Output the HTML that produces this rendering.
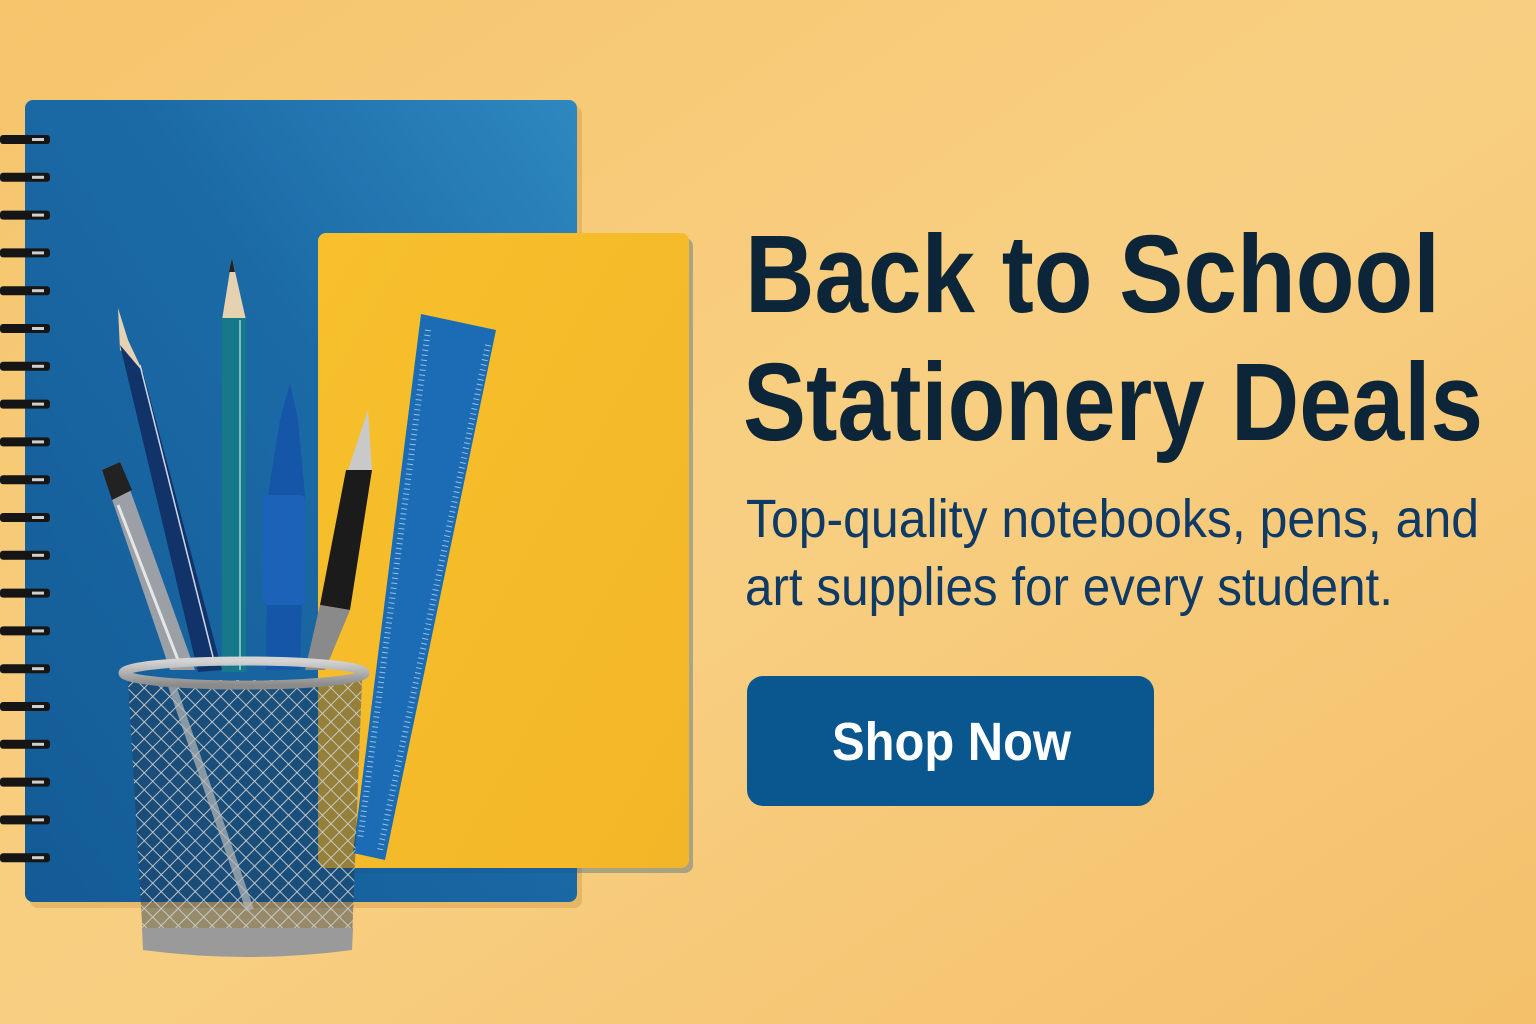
<!DOCTYPE html>
<html><head><meta charset="utf-8"><style>
html,body{margin:0;padding:0;width:1536px;height:1024px;overflow:hidden}
svg{display:block}
</style></head><body>
<svg width="1536" height="1024" viewBox="0 0 1536 1024" xmlns="http://www.w3.org/2000/svg">
<defs>
<linearGradient id="bg" x1="0" y1="0" x2="1" y2="1">
<stop offset="0" stop-color="#f6c56c"/><stop offset="0.5" stop-color="#f8cf82"/><stop offset="1" stop-color="#f4c06a"/>
</linearGradient>
<linearGradient id="blue" x1="0" y1="1" x2="1" y2="0">
<stop offset="0" stop-color="#135b96"/><stop offset="0.6" stop-color="#1b6aa6"/><stop offset="1" stop-color="#2e88bf"/>
</linearGradient>
<linearGradient id="yel" x1="0" y1="0" x2="1" y2="1">
<stop offset="0" stop-color="#f7c02c"/><stop offset="1" stop-color="#f3b628"/>
</linearGradient>
<pattern id="mesh" width="12" height="12" patternUnits="userSpaceOnUse" patternTransform="rotate(45)">
<rect width="12" height="12" fill="none"/>
<path d="M0 0H12M0 0V12" stroke="#cfcfcf" stroke-width="1.8"/>
</pattern>
<clipPath id="cup"><path d="M128 680 L362 680 L352 940 L143 940 Z"/></clipPath>
<linearGradient id="rim" x1="0" y1="0" x2="0" y2="1"><stop offset="0" stop-color="#d4d4d4"/><stop offset="1" stop-color="#8a8a8a"/></linearGradient>
</defs>
<rect width="1536" height="1024" fill="url(#bg)"/>
<rect x="30" y="106" width="552" height="802" rx="8" fill="#c8903a" opacity="0.35"/>
<rect x="25" y="100" width="552" height="802" rx="8" fill="url(#blue)"/>
<rect x="322" y="238" width="371" height="635" rx="8" fill="#1a5a90" opacity="0.35"/>
<rect x="318" y="233" width="371" height="635" rx="8" fill="url(#yel)"/>
<g>
<g id="ring"><rect x="0" y="135" width="50" height="9" rx="3" fill="#151515"/><rect x="32" y="138" width="12" height="3" fill="#cfcfcf"/></g>
<use href="#ring" y="37.8"/><use href="#ring" y="75.6"/><use href="#ring" y="113.4"/><use href="#ring" y="151.2"/>
<use href="#ring" y="189"/><use href="#ring" y="226.8"/><use href="#ring" y="264.6"/><use href="#ring" y="302.4"/>
<use href="#ring" y="340.2"/><use href="#ring" y="378"/><use href="#ring" y="415.8"/><use href="#ring" y="453.6"/>
<use href="#ring" y="491.4"/><use href="#ring" y="529.2"/><use href="#ring" y="567"/><use href="#ring" y="604.8"/>
<use href="#ring" y="642.6"/><use href="#ring" y="680.4"/><use href="#ring" y="718.2"/>
</g>
<polygon points="421,314 496,330 385,860 353,853" fill="#1b6cb5"/>
<g stroke="#cfe3f5" stroke-width="1">
<line x1="488" y1="345" x2="380" y2="850" stroke-dasharray="1 4" stroke-width="6" opacity="0.7"/>
<line x1="428" y1="330" x2="360" y2="840" stroke-dasharray="1 4" stroke-width="6" opacity="0.7"/>
</g>
<g>
<polygon points="118,308 128,340 143,372 120,350" fill="#e6d2b0"/>
<polygon points="120,345 143,372 222,670 198,672" fill="#11336a"/>
<line x1="140" y1="365" x2="215" y2="665" stroke="#cfd8e6" stroke-width="1.5"/>
<polygon points="232,258 222,320 246,320" fill="#e6d2b0"/>
<polygon points="232,258 229,272 235,272" fill="#222"/>
<rect x="222" y="318" width="24" height="354" fill="#16798a"/>
<line x1="240" y1="320" x2="240" y2="670" stroke="#9fd3dc" stroke-width="1.5"/>
<path d="M290 383 L280 420 L268 495 L266 670 L300 670 L305 495 L298 420 Z" fill="#1556a8"/>
<rect x="263" y="495" width="42" height="110" rx="4" fill="#1b62b8"/>
<polygon points="368,410 358,440 348,470 372,470 370,440" fill="#c9c9c9"/>
<polygon points="346,470 372,470 350,610 320,605" fill="#1b1b1b"/>
<polygon points="320,605 350,610 325,670 305,670" fill="#8a8a8a"/>
<polygon points="102,470 120,462 195,670 170,670" fill="#9aa0a6"/>
<polygon points="102,470 120,462 132,490 112,500" fill="#222"/>
<line x1="118" y1="505" x2="180" y2="665" stroke="#e6e6e6" stroke-width="3"/>
</g>
<path d="M128 680 L362 680 L352 940 L143 940 Z" fill="#1e3850" opacity="0.45"/>
<g clip-path="url(#cup)">
<rect x="100" y="660" width="300" height="300" fill="url(#mesh)"/>
<line x1="170" y1="680" x2="250" y2="910" stroke="#b8b8b8" stroke-width="8" opacity="0.7"/>
</g>
<ellipse cx="244" cy="673" rx="121" ry="12" fill="none" stroke="url(#rim)" stroke-width="9"/>
<path d="M142 928 L353 928 L352 950 Q248 964 143 950 Z" fill="#9a9a9a"/>
<g font-family="'Liberation Sans', sans-serif">
<text x="745" y="312" font-size="110" font-weight="700" fill="#0c2538" textLength="695" lengthAdjust="spacingAndGlyphs">Back to School</text>
<text x="743" y="440" font-size="110" font-weight="700" fill="#0c2538" textLength="740" lengthAdjust="spacingAndGlyphs">Stationery Deals</text>
<text x="746" y="537" font-size="54" fill="#0f3a66" textLength="733" lengthAdjust="spacingAndGlyphs">Top-quality notebooks, pens, and</text>
<text x="745" y="605" font-size="54" fill="#0f3a66" textLength="648" lengthAdjust="spacingAndGlyphs">art supplies for every student.</text>
</g>
<rect x="747" y="676" width="407" height="130" rx="16" fill="#0a5790"/>
<text x="832" y="760" font-family="'Liberation Sans', sans-serif" font-size="54" font-weight="700" fill="#fff" textLength="239" lengthAdjust="spacingAndGlyphs">Shop Now</text>
</svg>
</body></html>
